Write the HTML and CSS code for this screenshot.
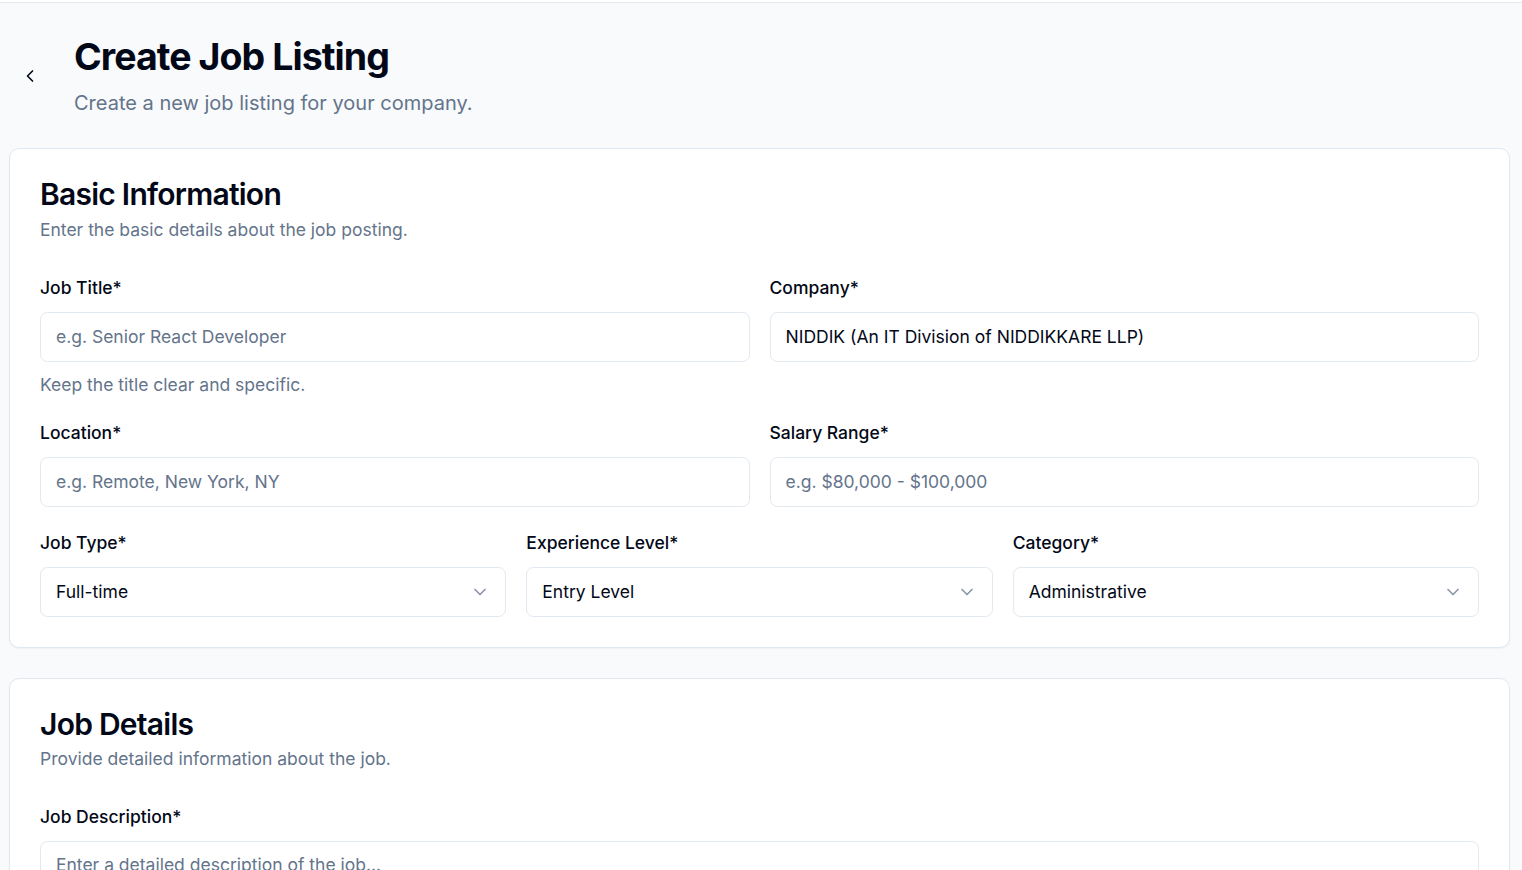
FILE: index.html
```html
<!DOCTYPE html>
<html lang="en">
<head>
<meta charset="utf-8">
<title>Create Job Listing</title>
<link rel="stylesheet" href="styles.css">
</head>
<body>
<div class="topbar"></div>
<main class="page">
  <header class="page-header">
    <button class="back-btn" type="button" aria-label="Back">
      <svg width="20" height="20" viewBox="0 0 24 24" fill="none" stroke="currentColor" stroke-width="2" stroke-linecap="round" stroke-linejoin="round"><path d="m15 18-6-6 6-6"/></svg>
    </button>
    <div class="page-titles">
      <h1 class="page-title">Create Job Listing</h1>
      <p class="page-sub">Create a new job listing for your company.</p>
    </div>
  </header>

  <section class="card">
    <div class="card-header">
      <h2 class="card-title">Basic Information</h2>
      <p class="card-desc">Enter the basic details about the job posting.</p>
    </div>
    <div class="card-content">
      <div class="grid grid-2">
        <div class="field">
          <label class="label">Job Title*</label>
          <div class="input placeholder">e.g. Senior React Developer</div>
          <p class="help">Keep the title clear and specific.</p>
        </div>
        <div class="field">
          <label class="label">Company*</label>
          <div class="input">NIDDIK (An IT Division of NIDDIKKARE LLP)</div>
        </div>
      </div>
      <div class="grid grid-2">
        <div class="field">
          <label class="label">Location*</label>
          <div class="input placeholder">e.g. Remote, New York, NY</div>
        </div>
        <div class="field">
          <label class="label">Salary Range*</label>
          <div class="input placeholder">e.g. $80,000 - $100,000</div>
        </div>
      </div>
      <div class="grid grid-3">
        <div class="field">
          <label class="label">Job Type*</label>
          <div class="input select"><span>Full-time</span>
            <svg class="chev" width="20" height="20" viewBox="0 0 24 24" fill="none" stroke="currentColor" stroke-width="2" stroke-linecap="round" stroke-linejoin="round"><path d="m6 9 6 6 6-6"/></svg>
          </div>
        </div>
        <div class="field">
          <label class="label">Experience Level*</label>
          <div class="input select"><span>Entry Level</span>
            <svg class="chev" width="20" height="20" viewBox="0 0 24 24" fill="none" stroke="currentColor" stroke-width="2" stroke-linecap="round" stroke-linejoin="round"><path d="m6 9 6 6 6-6"/></svg>
          </div>
        </div>
        <div class="field">
          <label class="label">Category*</label>
          <div class="input select"><span>Administrative</span>
            <svg class="chev" width="20" height="20" viewBox="0 0 24 24" fill="none" stroke="currentColor" stroke-width="2" stroke-linecap="round" stroke-linejoin="round"><path d="m6 9 6 6 6-6"/></svg>
          </div>
        </div>
      </div>
    </div>
  </section>

  <section class="card">
    <div class="card-header">
      <h2 class="card-title">Job Details</h2>
      <p class="card-desc">Provide detailed information about the job.</p>
    </div>
    <div class="card-content">
      <div class="field">
        <label class="label">Job Description*</label>
        <div class="input textarea placeholder">Enter a detailed description of the job...</div>
      </div>
    </div>
  </section>
</main>
</body>
</html>
```

FILE: styles.css
```css
* { box-sizing: border-box; }
html, body { margin: 0; padding: 0; }
body {
  background: #f8fafc;
  font-family: Inter, "Noto Sans", sans-serif;
  color: #020817;
  overflow: hidden;
}
.topbar {
  height: 3px;
  background: #ffffff;
  border-bottom: 1px solid #e5e7eb;
}
.page {
  padding: 0 12px 0 9px;
}
.page-header {
  display: flex;
  align-items: center;
  gap: 22px;
  padding: 31px 0 30px 0;
}
.back-btn {
  width: 45px;
  height: 45px;
  border: none;
  background: transparent;
  color: #020817;
  display: flex;
  align-items: center;
  justify-content: center;
  padding: 0;
  margin-left: -2px;
  margin-top: 0;
  border-radius: 8px;
}
.page-titles { display: flex; flex-direction: column; }
.page-title {
  margin: 0;
  font-size: 37.5px;
  line-height: 45px;
  font-weight: 700;
  letter-spacing: -0.94px;
}
.page-sub {
  margin: 9px 0 0 0;
  font-size: 20px;
  line-height: 30px;
  color: #64748b;
}
.card {
  background: #ffffff;
  border: 1px solid #e2e8f0;
  border-radius: 10px;
  box-shadow: 0 1px 2px rgba(0,0,0,0.04);
  margin-bottom: 30px;
}
.card-header {
  padding: 30px 30px 33px 30px;
  display: flex;
  flex-direction: column;
  gap: 7.5px;
}
.card-title {
  margin: 0;
  font-size: 30px;
  line-height: 30px;
  font-weight: 600;
  letter-spacing: -0.75px;
}
.card-desc {
  margin: 0;
  font-size: 17.5px;
  line-height: 25px;
  color: #64748b;
}
.card-content {
  padding: 0 30px 30px 30px;
  display: flex;
  flex-direction: column;
  gap: 23px;
}
.grid { display: grid; gap: 20px; }
.grid-2 { grid-template-columns: 1fr 1fr; }
.grid-3 { grid-template-columns: 1fr 1fr 1fr; }
.field { display: flex; flex-direction: column; }
.label {
  font-size: 17.5px;
  line-height: 25px;
  font-weight: 500;
  margin-bottom: 12px;
}
.input {
  height: 50px;
  border: 1px solid #e2e8f0;
  border-radius: 7.5px;
  background: #ffffff;
  padding: 0 15px;
  display: flex;
  align-items: center;
  font-size: 17.5px;
  color: #020817;
}
.placeholder { color: #64748b; }
.select { justify-content: space-between; }
.chev { color: #64748b; opacity: 0.75; margin-right: 0; }
.textarea { height: 120px; align-items: flex-start; padding-top: 12px; }
.help {
  margin: 10px 0 0 0;
  font-size: 17.5px;
  line-height: 25px;
  color: #64748b;
}
```
